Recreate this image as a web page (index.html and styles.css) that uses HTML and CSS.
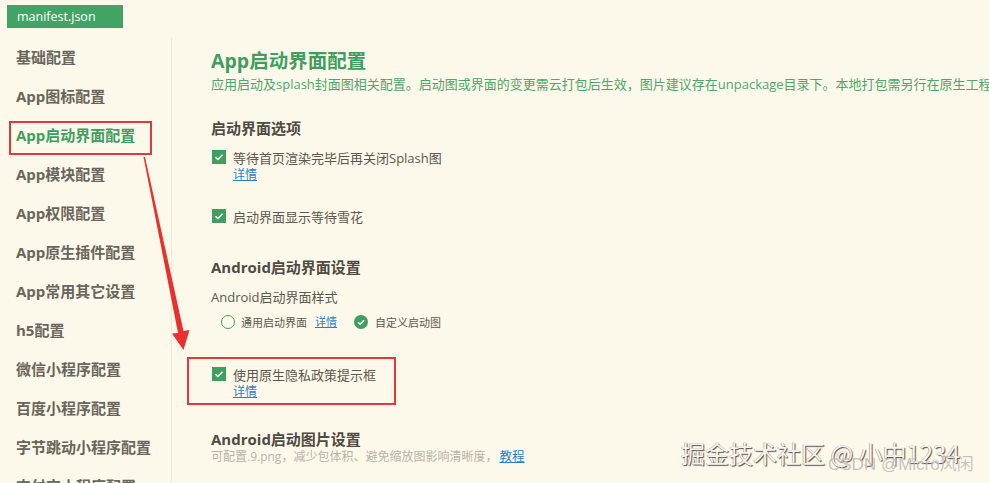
FILE: index.html
```html
<!DOCTYPE html>
<html lang="zh-CN">
<head>
<meta charset="utf-8">
<title>manifest.json</title>
<link rel="stylesheet" href="styles.css">
</head>
<body>
<div class="tabbar"><div class="tab">manifest.json</div></div>
<div class="main">
  <nav class="sidebar">
    <div class="item">基础配置</div>
    <div class="item">App图标配置</div>
    <div class="item active">App启动界面配置</div>
    <div class="item">App模块配置</div>
    <div class="item">App权限配置</div>
    <div class="item">App原生插件配置</div>
    <div class="item">App常用其它设置</div>
    <div class="item">h5配置</div>
    <div class="item">微信小程序配置</div>
    <div class="item">百度小程序配置</div>
    <div class="item">字节跳动小程序配置</div>
    <div class="item">支付宝小程序配置</div>
  </nav>
  <section class="content">
    <h1 class="title">App启动界面配置</h1>
    <p class="desc">应用启动及splash封面图相关配置。启动图或界面的变更需云打包后生效，图片建议存在unpackage目录下。本地打包需另行在原生工程中配置。</p>

    <h2 class="sec sec-first">启动界面选项</h2>
    <div class="opt opt-first">
      <div class="row"><span class="cb"><svg viewBox="0 0 14 14"><path d="M3.5 7.2l2.4 2.3 4.6-4.7" fill="none" stroke="#fff" stroke-width="1.5"/></svg></span><span>等待首页渲染完毕后再关闭Splash图</span></div>
      <a class="link">详情</a>
    </div>
    <div class="opt opt-second">
      <div class="row"><span class="cb"><svg viewBox="0 0 14 14"><path d="M3.5 7.2l2.4 2.3 4.6-4.7" fill="none" stroke="#fff" stroke-width="1.5"/></svg></span><span>启动界面显示等待雪花</span></div>
    </div>

    <h2 class="sec sec-android">Android启动界面设置</h2>
    <div class="label">Android启动界面样式</div>
    <div class="radios">
      <span class="radio"></span><span class="rlabel">通用启动界面</span><a class="link small">详情</a>
      <span class="radio on"><svg viewBox="0 0 14 14"><circle cx="7" cy="7" r="7" fill="#3f9e60"/><path d="M4 7.2l2.1 2.1 4-4.1" fill="none" stroke="#fff" stroke-width="1.5"/></svg></span><span class="rlabel">自定义启动图</span>
    </div>

    <div class="opt boxed">
      <div class="row"><span class="cb"><svg viewBox="0 0 14 14"><path d="M3.5 7.2l2.4 2.3 4.6-4.7" fill="none" stroke="#fff" stroke-width="1.5"/></svg></span><span>使用原生隐私政策提示框</span></div>
      <a class="link">详情</a>
    </div>

    <h2 class="sec sec-img">Android启动图片设置</h2>
    <div class="hint">可配置.9.png，减少包体积、避免缩放图影响清晰度，<a class="link">教程</a></div>
    <div class="sec sec-cut">480*762</div>
  </section>
</div>

<svg class="arrow" width="989" height="483" viewBox="0 0 989 483">
  <polygon points="143.5,157 145,157 183.5,331 189.5,330 183.5,350 172,333.5 178,333" fill="#e8302f"/>
</svg>

<div class="wm">掘金技术社区 @ 小中1234</div>
<div class="wm2">CSDN @Micro风闲</div>
</body>
</html>
```
FILE: styles.css
```css
* { box-sizing: border-box; }
html, body { margin: 0; padding: 0; }
body {
  width: 989px;
  height: 483px;
  overflow: hidden;
  position: relative;
  background: #fdf9ea;
  font-family: "Open Sans", "Noto Sans CJK SC", sans-serif;
  color: #5c574f;
}
.tabbar { height: 38px; padding: 4px 0 0 7px; }
.tab {
  display: inline-block;
  width: 116px;
  height: 23px;
  line-height: 23px;
  padding-left: 10px;
  background: #41a464;
  color: #fff;
  font-size: 12.5px;
}
.main { display: flex; height: 445px; }
.sidebar {
  width: 172px;
  flex: none;
  border-right: 1px solid #ede7d4;
}
.item {
  position: relative;
  padding-left: 16px;
  height: 39px;
  line-height: 39px;
  font-size: 15px;
  font-weight: bold;
  color: #6a655b;
  white-space: nowrap;
}
.item.active { color: #3f9e5f; }
.item.active::after {
  content: "";
  position: absolute;
  left: 9px;
  top: 5px;
  width: 139px;
  height: 30px;
  border: 2px solid #e5363a;
}
.content {
  flex: 1;
  min-width: 0;
  overflow: hidden;
  padding-left: 39px;
  white-space: nowrap;
}
.title {
  margin: 9px 0 0;
  font-size: 19.5px;
  line-height: 28px;
  font-weight: bold;
  color: #3f9e5f;
}
.desc {
  margin: 0;
  font-size: 13px;
  line-height: 18px;
  color: #4ea66c;
}
.sec {
  margin: 0;
  font-size: 15px;
  line-height: 22px;
  font-weight: bold;
  color: #4f4a42;
}
.sec-first { margin-top: 24px; }
.sec-android { margin-top: 30px; }
.sec-img { margin-top: 24px; line-height: 20px; }
.sec-cut { margin-top: 12px; }
.opt-first { margin-top: 8px; }
.opt-second { margin-top: 23px; }
.row {
  display: flex;
  align-items: center;
  gap: 7px;
  height: 20px;
  font-size: 13px;
  color: #5c574f;
}
.cb {
  width: 14px;
  height: 14px;
  margin-left: 1px;
  background: #3f9e60;
  display: flex;
}
.cb svg { width: 14px; height: 14px; }
.link {
  display: block;
  margin-left: 22px;
  font-size: 12px;
  line-height: 16px;
  color: #2b7dd4;
  text-decoration: underline;
  width: max-content;
}
.label {
  margin-top: 9px;
  font-size: 13px;
  line-height: 20px;
  color: #5c574f;
}
.radios {
  margin-top: 5px;
  height: 20px;
  display: flex;
  align-items: center;
  padding-left: 10px;
  font-size: 11px;
  color: #5c574f;
}
.radio {
  width: 14px;
  height: 14px;
  border: 1.3px solid #3f9e60;
  border-radius: 50%;
  flex: none;
}
.radio.on { border: none; display: flex; }
.radio.on svg { width: 14px; height: 14px; }
.rlabel { margin-left: 6px; }
.link.small {
  display: inline-block;
  margin-left: 8px;
  margin-right: 17px;
  font-size: 11px;
}
.radio.on + .rlabel { margin-left: 7px; }
.boxed {
  margin-top: 25px;
  margin-left: -24px;
  width: 209px;
  border: 2px solid #e5363a;
  padding: 5px 0 3px 22px;
}
.hint {
  font-size: 12px;
  line-height: 16px;
  color: #b9b3a6;
}
.hint .link { display: inline; margin-left: 2px; font-size: 12.5px; }
.arrow {
  position: absolute;
  left: 0;
  top: 0;
  pointer-events: none;
}
.wm {
  position: absolute;
  left: 681px;
  top: 437px;
  font-size: 24px;
  line-height: 32px;
  color: #f7f5ee;
  white-space: nowrap;
  font-family: "Noto Sans CJK SC", sans-serif;
  text-shadow: 1px 1px 1px #4d4d4d, -0.5px -0.5px 0 #9a9a9a;
}
.wm2 {
  position: absolute;
  left: 828px;
  top: 452px;
  font-size: 17px;
  line-height: 26px;
  color: rgba(185, 185, 185, 0.85);
  white-space: nowrap;
  font-family: "Liberation Sans", "Noto Sans CJK SC", sans-serif;
}
```
